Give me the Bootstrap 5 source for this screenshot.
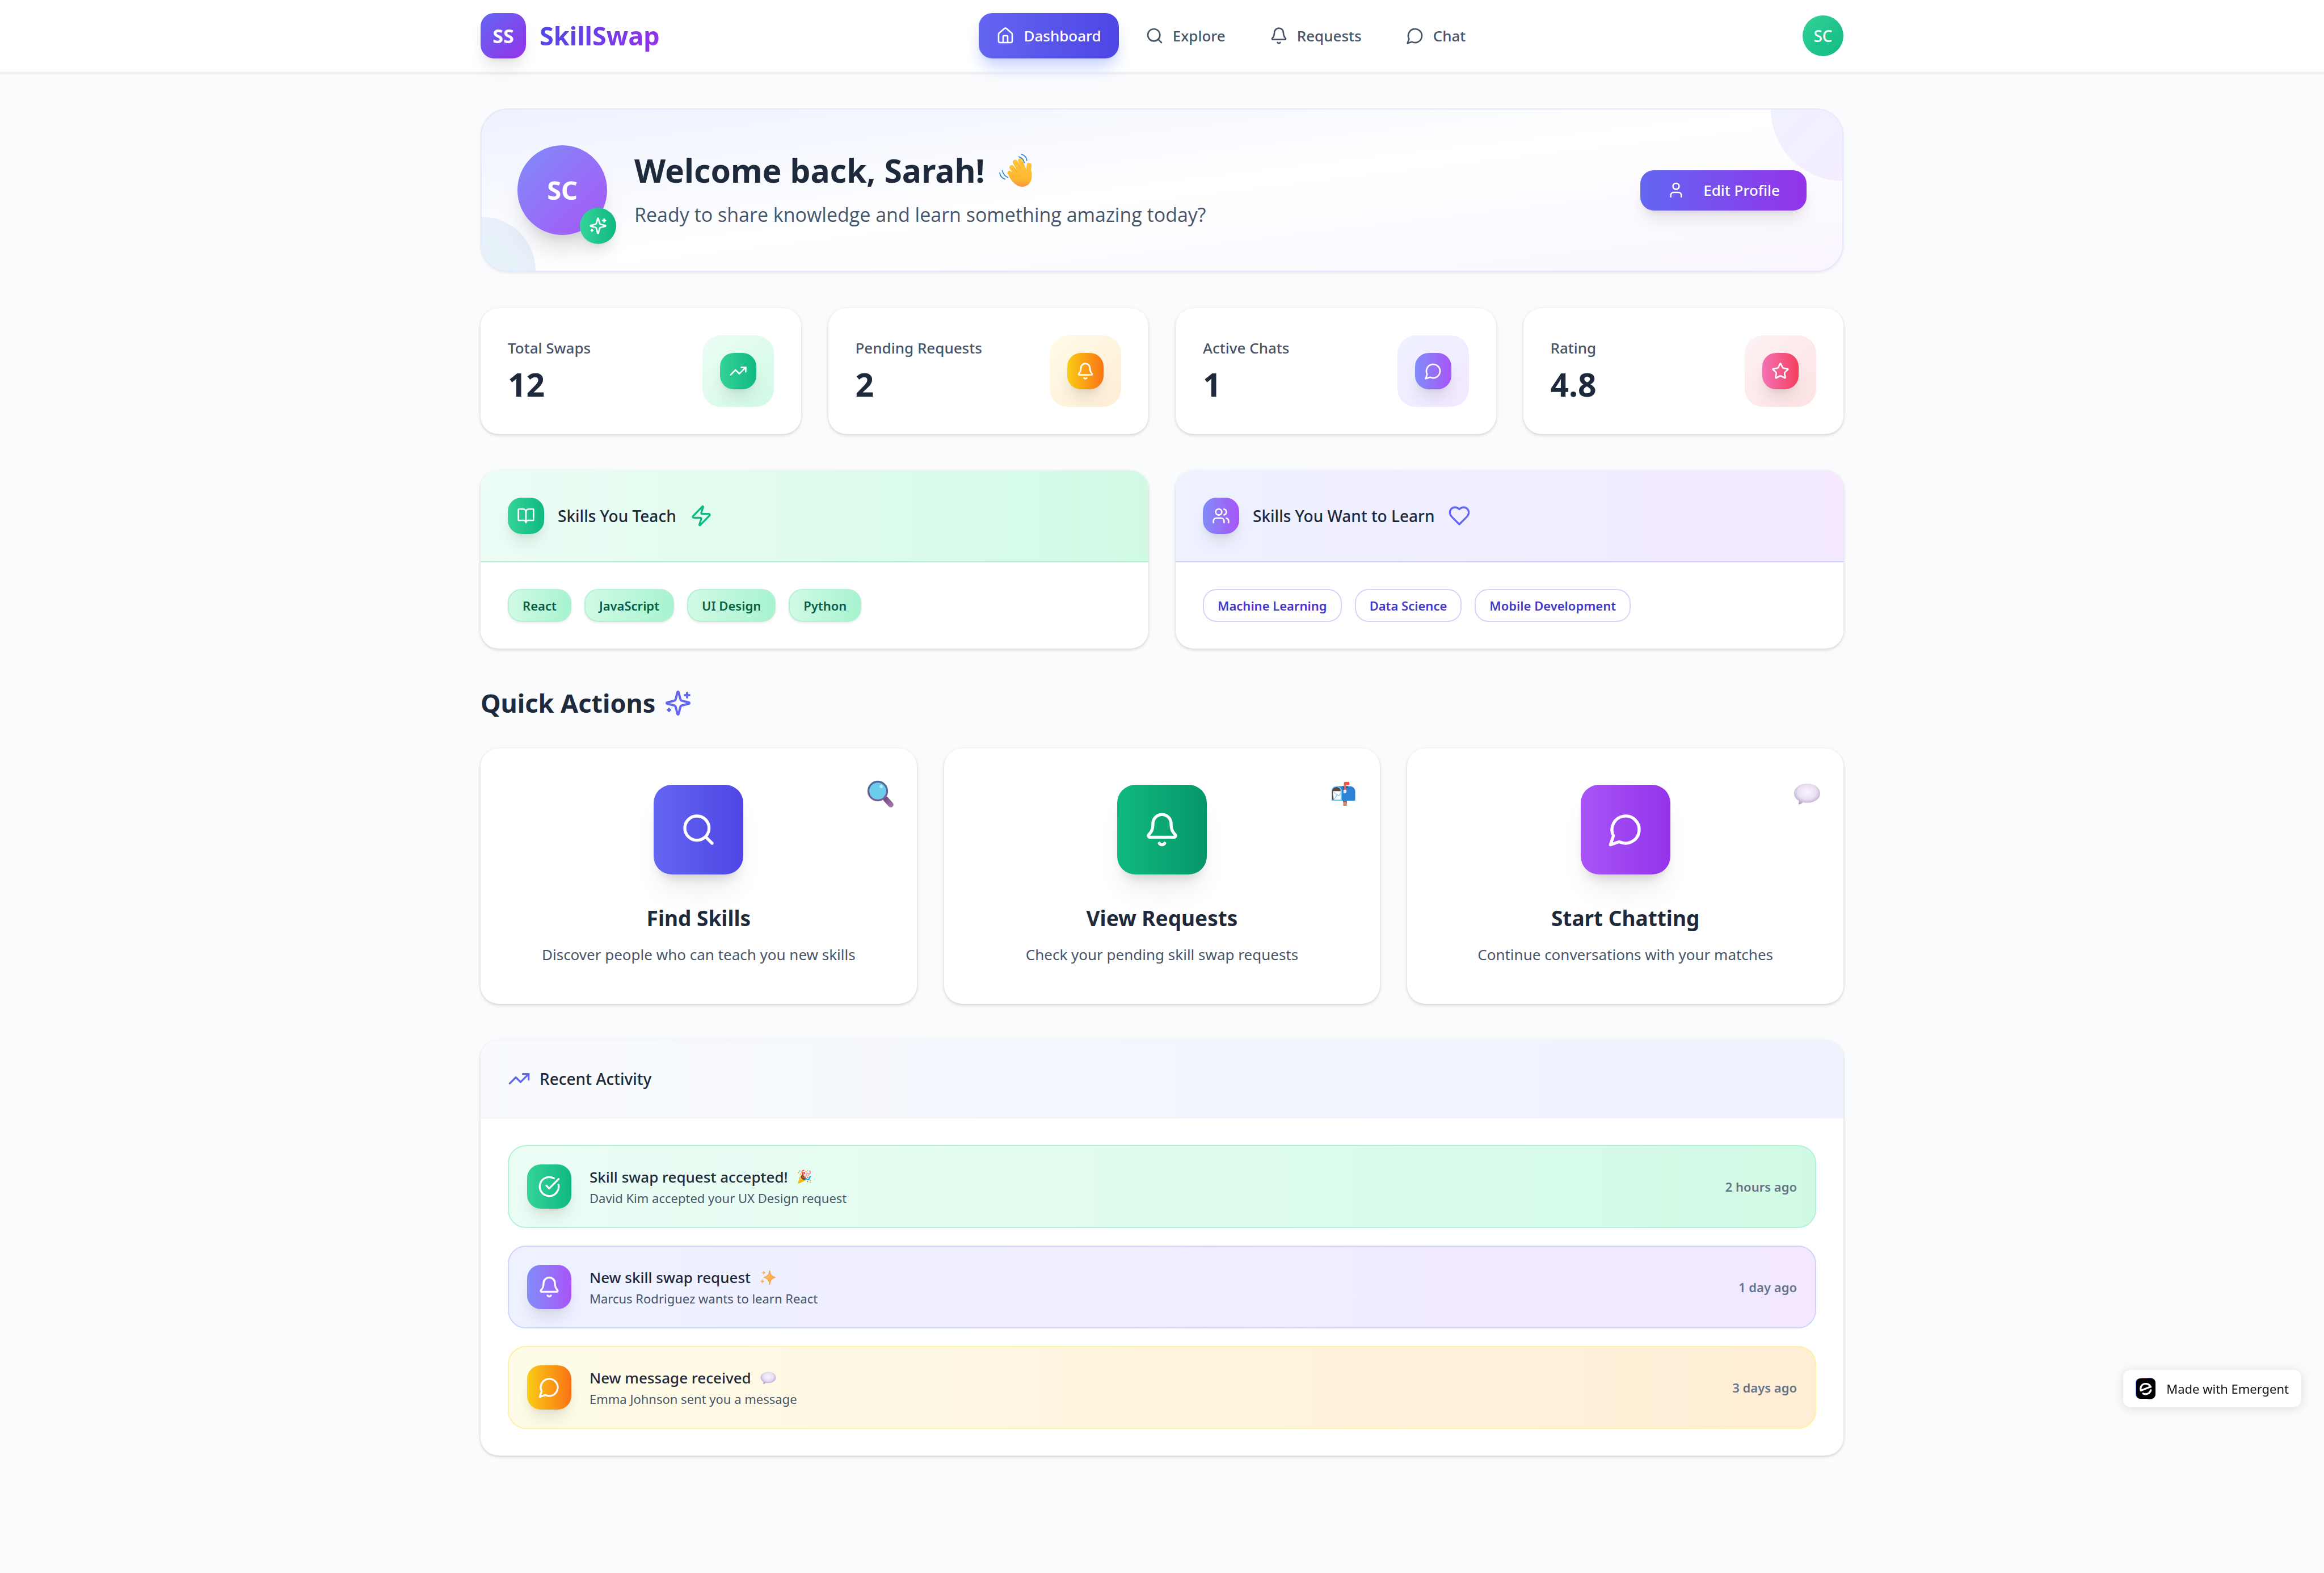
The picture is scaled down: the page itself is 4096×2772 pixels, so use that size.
<!DOCTYPE html>
<html lang="en">
<head>
<meta charset="utf-8">
<meta name="viewport" content="width=device-width, initial-scale=1">
<title>SkillSwap</title>
<link href="https://cdn.jsdelivr.net/npm/bootstrap@5.3.0/dist/css/bootstrap.min.css" rel="stylesheet">
<style>
:root{--fs-xs:22px;--fs-sm:26px;--fs-md:28px;--fs-lg:34px;--fs-xl:37px;--fs-2xl:45px;--fs-3xl:57px;
  --sh-sm:0 2px 4px rgba(0,0,0,.08);
  --sh-card:0 2px 6px rgba(0,0,0,.1),0 2px 4px rgba(0,0,0,.08);
  --sh-lg:0 20px 30px -6px rgba(0,0,0,.1),0 8px 12px -8px rgba(0,0,0,.1)}
body{font-family:"Noto Sans","Segoe UI",sans-serif;font-size:var(--fs-sm);line-height:40px;color:#1e293b;background:#fafbfd;min-height:100vh}
a{color:inherit;text-decoration:none}
h1,h2,h3,p{margin:0}
.page-wrap{width:100%;max-width:2402px;margin-inline:auto}
.ico{width:32px;height:32px;flex:none;fill:none;stroke:currentColor;stroke-width:2;stroke-linecap:round;stroke-linejoin:round}
.ico-40{width:40px;height:40px}
.ico-48{width:48px;height:48px}
.ico-64{width:64px;height:64px}
.fw-500{font-weight:500}
.ink-soft{color:#475569}
.emo{font-family:"Noto Color Emoji",sans-serif;font-weight:400}
.gap-16{gap:16px}.gap-24{gap:24px}.gap-48{gap:48px}
/* top bar */
.topbar{background:#fff;border-bottom:2px solid #f1f5f9;box-shadow:var(--sh-sm)}
.topbar .page-wrap{padding-block:23px}
.brand-tile{width:80px;height:80px;border-radius:24px;background:linear-gradient(135deg,#6366f1,#9333ea);font-size:var(--fs-lg);box-shadow:var(--sh-lg)}
.brand-name{font-size:var(--fs-2xl);line-height:64px;background:linear-gradient(90deg,#4f46e5,#9333ea);-webkit-background-clip:text;background-clip:text;color:transparent}
.menu-link{height:80px;padding:0 31px;border-radius:24px;color:#475569;font-weight:500}
.menu-link.active{color:#fff;background:linear-gradient(90deg,#6366f1,#4f46e5);box-shadow:0 20px 30px -6px #c7d2fe,0 8px 12px -8px #c7d2fe}
.user-dot{width:72px;height:72px;border:0;background:linear-gradient(135deg,#34d399,#10b981);font-size:var(--fs-md);font-weight:500}
main{padding:63px 0 200px}
/* welcome banner */
.hero{border:2px solid #e5e8fe;border-radius:48px;padding:63px;background:linear-gradient(to bottom right,#eef2ff,#fff 50%,#faf5ff);box-shadow:var(--sh-sm)}
.blob-a{width:254px;height:254px;top:-128px;right:-128px;background:linear-gradient(135deg,#eff2ff,#f5ecff)}
.blob-b{width:190px;height:190px;bottom:-95px;left:-95px;background:linear-gradient(45deg,#e5f6f1,#e8effc)}
.hero-avatar{width:158px;height:158px;background:linear-gradient(135deg,#818cf8,#a855f7);font-size:var(--fs-2xl);box-shadow:0 36px 48px -12px rgba(0,0,0,.13),0 16px 20px -12px rgba(0,0,0,.1)}
.hero-badge{width:64px;height:64px;right:-16px;bottom:-16px;background:linear-gradient(90deg,#34d399,#10b981);box-shadow:var(--sh-lg)}
.hero-title{font-size:var(--fs-3xl);line-height:78px;margin-bottom:8px}
.hero-sub{font-family:"Open Sans","Segoe UI",sans-serif;font-size:var(--fs-lg);line-height:63px}
.wave{width:60px;height:60px;flex:none}
.btn-edit{height:71px;padding:0 47px;gap:32px;border:0;border-radius:24px;background:linear-gradient(90deg,#6366f1,#9333ea);font-size:var(--fs-sm);font-weight:500;box-shadow:var(--sh-lg)}
/* panels */
.panel{background:#fff;border-radius:32px;box-shadow:var(--sh-card);overflow:hidden}
.wide-row{--bs-gutter-x:48px;row-gap:48px}
.section{margin-top:64px}
.stat{padding:48px}
.stat-num{font-size:var(--fs-3xl);line-height:77px;margin-top:6px}
.stat-box{width:126px;height:126px;border-radius:32px}
.tile{width:64px;height:64px;border-radius:24px;color:#fff;flex:none;box-shadow:var(--sh-lg)}
.g-green{background:linear-gradient(90deg,#34d399,#10b981)}
.g-amber{background:linear-gradient(90deg,#facc15,#f97316)}
.g-violet{background:linear-gradient(90deg,#818cf8,#a855f7)}
.g-rose{background:linear-gradient(90deg,#f472b6,#f43f5e)}
.b-green{background:linear-gradient(135deg,#ecfdf5,#d1fae5)}
.b-amber{background:linear-gradient(135deg,#fefce8,#ffedd5)}
.b-violet{background:linear-gradient(135deg,#eef2ff,#f3e8ff)}
.b-rose{background:linear-gradient(135deg,#fdf2f4,#fee2e2)}
.panel-head{padding:48px;gap:24px;border-bottom:2px solid}
.panel-head h2{font-size:var(--fs-md);line-height:39px;font-weight:500}
.h-green{background:linear-gradient(90deg,#ecfdf5,#d1fae5);border-color:#bcebd7}
.h-violet{background:linear-gradient(90deg,#eef2ff,#f3e8ff);border-color:#cfcff8}
.h-slate{background:linear-gradient(90deg,#f8fafc,#eef2ff);border-color:#f1f5f9;gap:16px}
.panel-body{padding:47px 48px}
.skills{gap:23px}
.skill{height:58px;padding:0 24px;border:2px solid;border-radius:24px;font-size:var(--fs-xs);font-weight:600}
.skill-teach{color:#065f46;border-color:#b4f0d5;background:linear-gradient(90deg,#d1fae5,#a7f3d0);box-shadow:var(--sh-sm)}
.skill-learn{color:#4338ca;border-color:#d3d6fb;background:#fff}
/* quick actions */
.section-title{font-size:var(--fs-2xl);line-height:64px;margin-bottom:48px}
.text-indigo{color:#6366f1}.text-emerald{color:#10b981}
.action{padding:64px 48px}
.action-tile{width:158px;height:158px;border-radius:32px;margin-bottom:47px;box-shadow:0 36px 48px -12px rgba(0,0,0,.08),0 16px 20px -12px rgba(0,0,0,.16)}
.a-indigo{background:linear-gradient(90deg,#6366f1,#4f46e5)}
.a-green{background:linear-gradient(90deg,#10b981,#059669)}
.a-purple{background:linear-gradient(90deg,#a855f7,#9333ea)}
.action h3{font-size:var(--fs-xl);line-height:59px;margin-bottom:12px}
.action p{line-height:46px}
.corner{top:56px;right:40px;width:48px;height:48px;font-size:38px;line-height:48px;opacity:.9}
/* activity */
.feed{gap:31px}
.feed-item{padding:32px;gap:32px;border:2px solid;border-radius:32px}
.feed-item .tile{width:78px;height:78px}
.feed-item p{font-size:var(--fs-xs);line-height:35px}
.feed-item time{font-size:var(--fs-xs);font-weight:600;color:#64748b}
.i-green{background:linear-gradient(90deg,#ecfdf5,#d1fae5);border-color:#b0f4d6}
.i-violet{background:linear-gradient(90deg,#eef2ff,#f3e8ff);border-color:#cfd6fd}
.i-amber{background:linear-gradient(90deg,#fefce8,#ffedd5);border-color:#fdf2a4}
.mini{width:28px;height:28px;flex:none}
.mini-emo{font-size:var(--fs-xs);line-height:40px}
.made-by{right:40px;bottom:292px;height:66px;padding:0 22px;gap:18px;background:#fff;border-radius:14px;color:#111;font-size:var(--fs-xs);box-shadow:0 2px 18px rgba(0,0,0,.13)}
</style>
</head>
<body>
<svg width="0" height="0" class="position-absolute" aria-hidden="true">
  <defs>
    <radialGradient id="bub" cx=".5" cy=".4" r=".6"><stop offset="0" stop-color="#fbf3fd"/><stop offset=".6" stop-color="#e6dcf1"/><stop offset="1" stop-color="#ab9cc2"/></radialGradient>
    <linearGradient id="hnd" x1="0" y1="0" x2="1" y2="1"><stop offset="0" stop-color="#6d3b78"/><stop offset="1" stop-color="#94609c"/></linearGradient>
    <linearGradient id="rim" x1="0" y1="0" x2="0" y2="1"><stop offset="0" stop-color="#3d5a96"/><stop offset="1" stop-color="#6d4a8c"/></linearGradient>
    <linearGradient id="spk" x1="0" y1="0" x2="1" y2="1"><stop offset="0" stop-color="#ffd166"/><stop offset="1" stop-color="#f79445"/></linearGradient>
    <linearGradient id="skin" gradientUnits="userSpaceOnUse" x1="240" y1="100" x2="225" y2="256"><stop offset="0" stop-color="#ffc83d"/><stop offset=".75" stop-color="#fdb62f"/><stop offset="1" stop-color="#f5924a"/></linearGradient>
  </defs>
  <symbol id="i-home" viewBox="0 0 24 24"><path d="M15 21v-8a1 1 0 0 0-1-1h-4a1 1 0 0 0-1 1v8"/><path d="M3 10a2 2 0 0 1 .709-1.528l7-5.999a2 2 0 0 1 2.582 0l7 5.999A2 2 0 0 1 21 10v9a2 2 0 0 1-2 2H5a2 2 0 0 1-2-2z"/></symbol>
  <symbol id="i-search" viewBox="0 0 24 24"><circle cx="11" cy="11" r="8"/><path d="m21 21-4.3-4.3"/></symbol>
  <symbol id="i-bell" viewBox="0 0 24 24"><path d="M10.268 21a2 2 0 0 0 3.464 0"/><path d="M3.262 15.326A1 1 0 0 0 4 17h16a1 1 0 0 0 .74-1.673C19.41 13.956 18 12.499 18 8A6 6 0 0 0 6 8c0 4.499-1.411 5.956-2.738 7.326"/></symbol>
  <symbol id="i-chat" viewBox="0 0 24 24"><path d="M7.9 20A9 9 0 1 0 4 16.1L2 22Z"/></symbol>
  <symbol id="i-user" viewBox="0 0 24 24"><path d="M19 21v-2a4 4 0 0 0-4-4H9a4 4 0 0 0-4 4v2"/><circle cx="12" cy="7" r="4"/></symbol>
  <symbol id="i-spark" viewBox="0 0 24 24"><path d="M9.937 15.5A2 2 0 0 0 8.5 14.063l-6.135-1.582a.5.5 0 0 1 0-.962L8.5 9.936A2 2 0 0 0 9.937 8.5l1.582-6.135a.5.5 0 0 1 .963 0L14.063 8.5A2 2 0 0 0 15.5 9.937l6.135 1.581a.5.5 0 0 1 0 .964L15.5 14.063a2 2 0 0 0-1.437 1.437l-1.582 6.135a.5.5 0 0 1-.963 0z"/><path d="M20 3v4M22 5h-4M4 17v2M5 18H3"/></symbol>
  <symbol id="i-trend" viewBox="0 0 24 24"><path d="M22 7l-8.5 8.5-5-5L2 17"/><path d="M16 7h6v6"/></symbol>
  <symbol id="i-star" viewBox="0 0 24 24"><path d="M11.525 2.295a.53.53 0 0 1 .95 0l2.31 4.679a2.123 2.123 0 0 0 1.595 1.16l5.166.756a.53.53 0 0 1 .294.904l-3.736 3.638a2.123 2.123 0 0 0-.611 1.878l.882 5.14a.53.53 0 0 1-.771.56l-4.618-2.428a2.122 2.122 0 0 0-1.973 0L6.396 21.01a.53.53 0 0 1-.77-.56l.881-5.139a2.122 2.122 0 0 0-.611-1.879L2.16 9.795a.53.53 0 0 1 .294-.906l5.165-.755a2.122 2.122 0 0 0 1.597-1.16z"/></symbol>
  <symbol id="i-book" viewBox="0 0 24 24"><path d="M12 7v14"/><path d="M3 18a1 1 0 0 1-1-1V4a1 1 0 0 1 1-1h5a4 4 0 0 1 4 4 4 4 0 0 1 4-4h5a1 1 0 0 1 1 1v13a1 1 0 0 1-1 1h-6a3 3 0 0 0-3 3 3 3 0 0 0-3-3z"/></symbol>
  <symbol id="i-zap" viewBox="0 0 24 24"><path d="M4 14a1 1 0 0 1-.78-1.63l9.9-10.2a.5.5 0 0 1 .86.46l-1.92 6.02A1 1 0 0 0 13 10h7a1 1 0 0 1 .78 1.63l-9.9 10.2a.5.5 0 0 1-.86-.46l1.92-6.02A1 1 0 0 0 11 14z"/></symbol>
  <symbol id="i-users" viewBox="0 0 24 24"><path d="M16 21v-2a4 4 0 0 0-4-4H6a4 4 0 0 0-4 4v2"/><circle cx="9" cy="7" r="4"/><path d="M22 21v-2a4 4 0 0 0-3-3.87M16 3.13a4 4 0 0 1 0 7.75"/></symbol>
  <symbol id="i-heart" viewBox="0 0 24 24"><path d="M19 14c1.490-1.460 3-3.210 3-5.500A5.500 5.500 0 0 0 16.500 3c-1.760 0-3 .5-4.500 2-1.500-1.500-2.740-2-4.500-2A5.500 5.500 0 0 0 2 8.500c0 2.300 1.500 4.050 3 5.500l7 7Z"/></symbol>
  <symbol id="i-check" viewBox="0 0 24 24"><path d="M21.801 10A10 10 0 1 1 17 3.335"/><path d="m9 11 3 3L22 4"/></symbol>
  <symbol id="e-wave" viewBox="112 74 184 184">
    <g fill="none" stroke="url(#skin)" stroke-linecap="round">
      <path d="M277 139q-2 28-8 50" stroke-width="27"/><path d="M171 180l36 42" stroke-width="22"/><path d="M183 151l36 50" stroke-width="25"/><path d="M201 122l34 60" stroke-width="26"/><path d="M229 114l24 62" stroke-width="25"/>
    </g>
    <path d="M190 165l55-25 15 20q14 8 30 10c4 30 2 50-12 68-14 18-44 22-66 10-20-12-34-30-46-52z" fill="url(#skin)"/>
    <path d="M193 150l16 24M212 122l18 36M239 126l9 20" fill="none" stroke="#e8942c" stroke-width="3" stroke-linecap="round" opacity=".7"/>
    <path d="M236 80q26 8 29 34M222 93q24 8 29 32M118 180q4 26 29 34M132 168q7 28 30 37" fill="none" stroke="#1b7fd0" stroke-width="5" stroke-linecap="round"/>
  </symbol>
  <symbol id="e-bubble" viewBox="0 0 48 48"><path d="M24 6C11 6 1 13.500 1 23c0 5.500 3 10 8 13 .8 2 .4 3.800-.6 6.600 3 .2 6.500-1.600 8.600-3.800 2.200.6 4.600.9 7 .9 13 0 23-7 23-16.700S37 6 24 6z" fill="url(#bub)"/></symbol>
  <symbol id="e-glass" viewBox="0 0 48 48"><path d="M33 33l9 10" stroke="url(#hnd)" stroke-width="9.500" stroke-linecap="round" fill="none"/><path d="M29 29l4 4" stroke="#5d3f70" stroke-width="4"/><circle cx="19" cy="19" r="16.500" fill="#5cc8e8" stroke="url(#rim)" stroke-width="3.400"/><circle cx="25" cy="11" r="3" fill="#a9e8f7"/></symbol>
  <symbol id="e-stars" viewBox="0 0 48 48"><g fill="url(#spk)"><path d="M30 4c1.500 12 5 17 17 20-12 3-15.500 9-17 21-1.500-12-5-18-17-21 12-3 15.500-8 17-20z" stroke="#f9a750" stroke-width="3" stroke-linejoin="round"/><path d="M12 2c.8 5 2 6.500 7 8-5 1.500-6.200 3-7 8-.8-5-2-6.500-7-8 5-1.500 6.200-3 7-8z"/><path d="M8 28c.8 5 2 6.500 7 8-5 1.500-6.200 3-7 8-.8-5-2-6.500-7-8 5-1.500 6.200-3 7-8z"/></g></symbol>
</svg>

<header class="topbar">
  <div class="page-wrap d-flex align-items-center justify-content-between">
    <a href="#" class="d-flex align-items-center gap-24">
      <span class="brand-tile d-flex align-items-center justify-content-center text-white fw-bold">SS</span>
      <span class="brand-name fw-bold">SkillSwap</span>
    </a>
    <nav class="d-flex gap-16" aria-label="Main">
      <a href="#" class="menu-link active d-flex align-items-center gap-16" aria-current="page"><svg class="ico"><use href="#i-home"/></svg>Dashboard</a>
      <a href="#" class="menu-link d-flex align-items-center gap-16"><svg class="ico"><use href="#i-search"/></svg>Explore</a>
      <a href="#" class="menu-link d-flex align-items-center gap-16"><svg class="ico"><use href="#i-bell"/></svg>Requests</a>
      <a href="#" class="menu-link d-flex align-items-center gap-16"><svg class="ico"><use href="#i-chat"/></svg>Chat</a>
    </nav>
    <button type="button" class="user-dot rounded-circle text-white p-0">SC</button>
  </div>
</header>

<main class="page-wrap">
  <section class="hero position-relative overflow-hidden d-flex align-items-center justify-content-between">
    <span class="blob-a position-absolute rounded-circle"></span>
    <span class="blob-b position-absolute rounded-circle"></span>
    <div class="d-flex align-items-center position-relative gap-48">
      <div class="hero-avatar position-relative rounded-circle d-flex align-items-center justify-content-center text-white fw-bold">SC
        <span class="hero-badge position-absolute rounded-circle d-flex align-items-center justify-content-center"><svg class="ico"><use href="#i-spark"/></svg></span>
      </div>
      <div>
        <h1 class="hero-title fw-bold d-flex align-items-center gap-24">Welcome back, Sarah! <svg class="wave" role="img" aria-label="Waving hand"><use href="#e-wave"/></svg></h1>
        <p class="hero-sub ink-soft">Ready to share knowledge and learn something amazing today?</p>
      </div>
    </div>
    <button type="button" class="btn btn-edit position-relative text-white d-flex align-items-center"><svg class="ico"><use href="#i-user"/></svg>Edit Profile</button>
  </section>

  <section class="section row wide-row row-cols-1 row-cols-md-2 row-cols-xl-4">
    <div class="col"><div class="panel stat d-flex align-items-center justify-content-between">
      <div><p class="fw-500 ink-soft">Total Swaps</p><p class="stat-num fw-bold">12</p></div>
      <div class="stat-box b-green d-flex align-items-center justify-content-center"><span class="tile g-green d-flex align-items-center justify-content-center"><svg class="ico"><use href="#i-trend"/></svg></span></div>
    </div></div>
    <div class="col"><div class="panel stat d-flex align-items-center justify-content-between">
      <div><p class="fw-500 ink-soft">Pending Requests</p><p class="stat-num fw-bold">2</p></div>
      <div class="stat-box b-amber d-flex align-items-center justify-content-center"><span class="tile g-amber d-flex align-items-center justify-content-center"><svg class="ico"><use href="#i-bell"/></svg></span></div>
    </div></div>
    <div class="col"><div class="panel stat d-flex align-items-center justify-content-between">
      <div><p class="fw-500 ink-soft">Active Chats</p><p class="stat-num fw-bold">1</p></div>
      <div class="stat-box b-violet d-flex align-items-center justify-content-center"><span class="tile g-violet d-flex align-items-center justify-content-center"><svg class="ico"><use href="#i-chat"/></svg></span></div>
    </div></div>
    <div class="col"><div class="panel stat d-flex align-items-center justify-content-between">
      <div><p class="fw-500 ink-soft">Rating</p><p class="stat-num fw-bold">4.8</p></div>
      <div class="stat-box b-rose d-flex align-items-center justify-content-center"><span class="tile g-rose d-flex align-items-center justify-content-center"><svg class="ico"><use href="#i-star"/></svg></span></div>
    </div></div>
  </section>

  <section class="section row wide-row row-cols-1 row-cols-lg-2">
    <div class="col"><div class="panel">
      <div class="panel-head h-green d-flex align-items-center"><span class="tile g-green d-flex align-items-center justify-content-center"><svg class="ico"><use href="#i-book"/></svg></span><h2>Skills You Teach</h2><svg class="ico ico-40 text-emerald"><use href="#i-zap"/></svg></div>
      <div class="panel-body skills d-flex flex-wrap">
        <span class="skill skill-teach d-flex align-items-center">React</span>
        <span class="skill skill-teach d-flex align-items-center">JavaScript</span>
        <span class="skill skill-teach d-flex align-items-center">UI Design</span>
        <span class="skill skill-teach d-flex align-items-center">Python</span>
      </div>
    </div></div>
    <div class="col"><div class="panel">
      <div class="panel-head h-violet d-flex align-items-center"><span class="tile g-violet d-flex align-items-center justify-content-center"><svg class="ico"><use href="#i-users"/></svg></span><h2>Skills You Want to Learn</h2><svg class="ico ico-40 text-indigo"><use href="#i-heart"/></svg></div>
      <div class="panel-body skills d-flex flex-wrap">
        <span class="skill skill-learn d-flex align-items-center">Machine Learning</span>
        <span class="skill skill-learn d-flex align-items-center">Data Science</span>
        <span class="skill skill-learn d-flex align-items-center">Mobile Development</span>
      </div>
    </div></div>
  </section>

  <h2 class="section section-title fw-bold d-flex align-items-center gap-16">Quick Actions <svg class="ico ico-48 text-indigo"><use href="#i-spark"/></svg></h2>
  <section class="row wide-row row-cols-1 row-cols-lg-3">
    <div class="col"><a href="#" class="panel action position-relative d-flex flex-column align-items-center text-center">
      <svg class="corner position-absolute"><use href="#e-glass"/></svg>
      <span class="action-tile a-indigo text-white d-flex align-items-center justify-content-center"><svg class="ico ico-64"><use href="#i-search"/></svg></span>
      <h3 class="fw-bold">Find Skills</h3><p class="ink-soft">Discover people who can teach you new skills</p>
    </a></div>
    <div class="col"><a href="#" class="panel action position-relative d-flex flex-column align-items-center text-center">
      <span class="corner emo position-absolute">📬</span>
      <span class="action-tile a-green text-white d-flex align-items-center justify-content-center"><svg class="ico ico-64"><use href="#i-bell"/></svg></span>
      <h3 class="fw-bold">View Requests</h3><p class="ink-soft">Check your pending skill swap requests</p>
    </a></div>
    <div class="col"><a href="#" class="panel action position-relative d-flex flex-column align-items-center text-center">
      <svg class="corner position-absolute"><use href="#e-bubble"/></svg>
      <span class="action-tile a-purple text-white d-flex align-items-center justify-content-center"><svg class="ico ico-64"><use href="#i-chat"/></svg></span>
      <h3 class="fw-bold">Start Chatting</h3><p class="ink-soft">Continue conversations with your matches</p>
    </a></div>
  </section>

  <section class="section panel">
    <div class="panel-head h-slate d-flex align-items-center"><svg class="ico ico-40 text-indigo"><use href="#i-trend"/></svg><h2>Recent Activity</h2></div>
    <div class="panel-body feed d-flex flex-column">
      <article class="feed-item i-green d-flex align-items-center">
        <span class="tile g-green d-flex align-items-center justify-content-center"><svg class="ico ico-40"><use href="#i-check"/></svg></span>
        <div class="flex-grow-1"><div class="fw-500 d-flex align-items-center gap-16">Skill swap request accepted! <span class="emo mini-emo">🎉</span></div><p class="ink-soft">David Kim accepted your UX Design request</p></div>
        <time>2 hours ago</time>
      </article>
      <article class="feed-item i-violet d-flex align-items-center">
        <span class="tile g-violet d-flex align-items-center justify-content-center"><svg class="ico ico-40"><use href="#i-bell"/></svg></span>
        <div class="flex-grow-1"><div class="fw-500 d-flex align-items-center gap-16">New skill swap request <svg class="mini"><use href="#e-stars"/></svg></div><p class="ink-soft">Marcus Rodriguez wants to learn React</p></div>
        <time>1 day ago</time>
      </article>
      <article class="feed-item i-amber d-flex align-items-center">
        <span class="tile g-amber d-flex align-items-center justify-content-center"><svg class="ico ico-40"><use href="#i-chat"/></svg></span>
        <div class="flex-grow-1"><div class="fw-500 d-flex align-items-center gap-16">New message received <svg class="mini"><use href="#e-bubble"/></svg></div><p class="ink-soft">Emma Johnson sent you a message</p></div>
        <time>3 days ago</time>
      </article>
    </div>
  </section>
</main>

<a href="#" class="made-by position-fixed d-flex align-items-center">
  <svg width="36" height="38" viewBox="0 0 36 38"><rect x="0" y="1" width="35" height="36" rx="8" fill="#5a6be0"/><rect x="6" y="0" width="28" height="20" rx="8" fill="#e58aa0"/><rect x="16" y="0" width="18" height="38" rx="8" fill="#3f62d8"/><rect x="1" y="1" width="34" height="36" rx="8" fill="#000"/><path d="M27 17.500A9.500 9.500 0 0 0 9.500 15.500q-1.500 3.500-.3 7L27 15.500M27 20.500A9.500 9.500 0 0 1 12 27" fill="none" stroke="#fff" stroke-width="3.200" stroke-linejoin="round"/></svg>
  Made with Emergent
</a>
<script src="https://cdn.jsdelivr.net/npm/bootstrap@5.3.0/dist/js/bootstrap.bundle.min.js"></script>
</body>
</html>
